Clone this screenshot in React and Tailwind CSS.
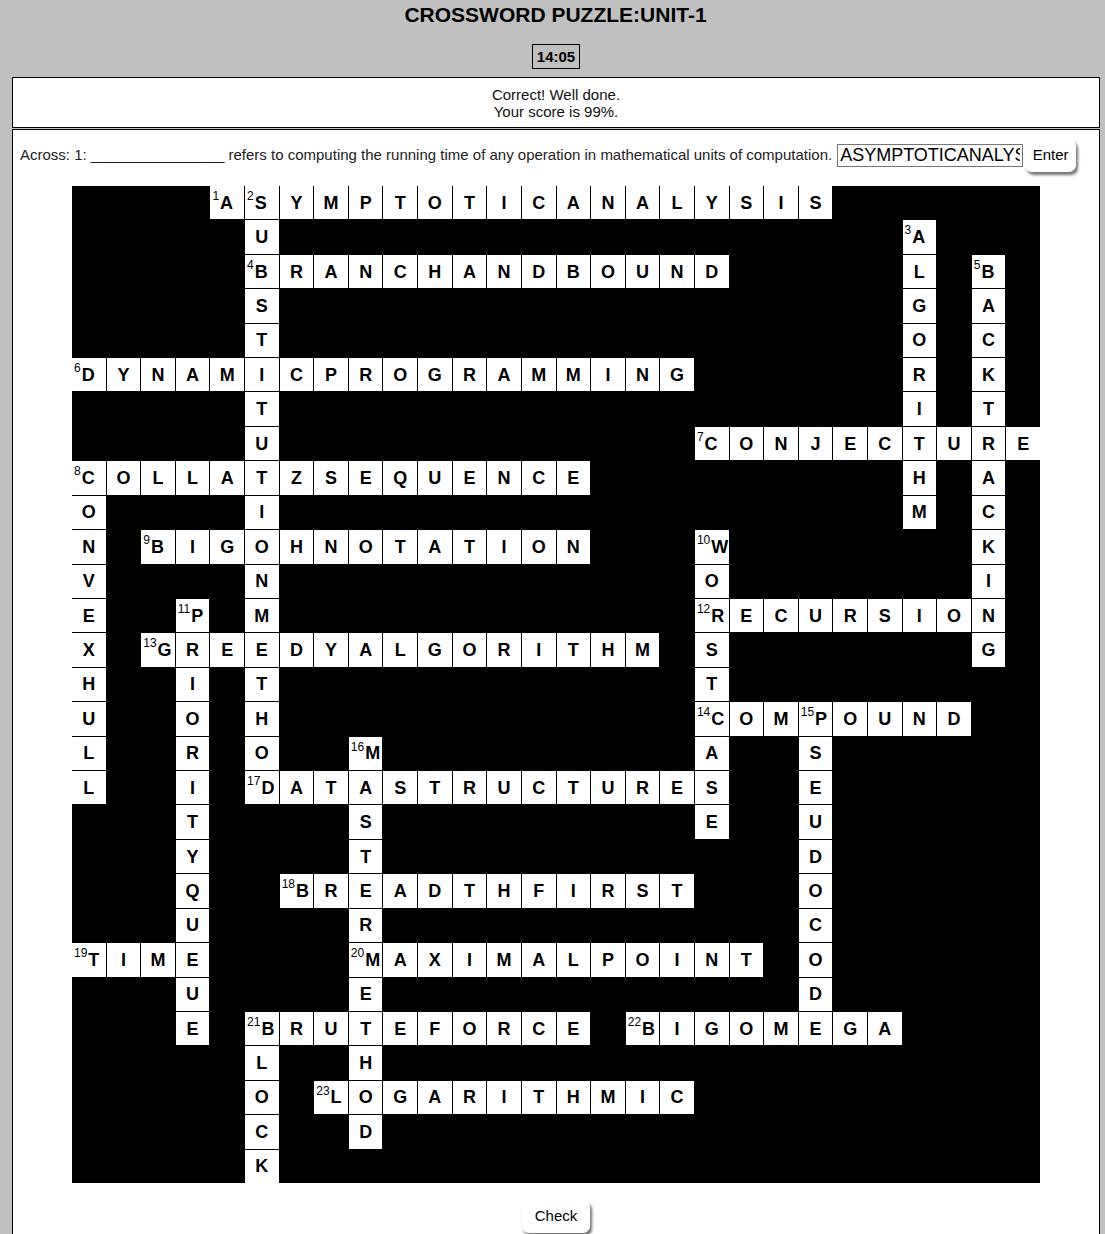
import React from 'react';

const COLS = 28;
const ROWS = 29;

// [row, col, direction, answer, clue number]
const words = [
  [0, 4, 'A', 'ASYMPTOTICANALYSIS', 1],
  [0, 5, 'D', 'SUBSTITUTIONMETHOD', 2],
  [1, 24, 'D', 'ALGORITHM', 3],
  [2, 5, 'A', 'BRANCHANDBOUND', 4],
  [2, 26, 'D', 'BACKTRACKING', 5],
  [5, 0, 'A', 'DYNAMICPROGRAMMING', 6],
  [7, 18, 'A', 'CONJECTURE', 7],
  [8, 0, 'A', 'COLLATZSEQUENCE', 8],
  [8, 0, 'D', 'CONVEXHULL', 8],
  [10, 2, 'A', 'BIGOHNOTATION', 9],
  [10, 18, 'D', 'WORSTCASE', 10],
  [12, 3, 'D', 'PRIORITYQUEUE', 11],
  [12, 18, 'A', 'RECURSION', 12],
  [13, 2, 'A', 'GREEDYALGORITHM', 13],
  [15, 18, 'A', 'COMPOUND', 14],
  [15, 21, 'D', 'PSEUDOCODE', 15],
  [16, 8, 'D', 'MASTERMETHOD', 16],
  [17, 5, 'A', 'DATASTRUCTURES', 17],
  [20, 6, 'A', 'BREADTHFIRST', 18],
  [22, 0, 'A', 'TIME', 19],
  [22, 8, 'A', 'MAXIMALPOINT', 20],
  [24, 5, 'A', 'BRUTEFORCE', 21],
  [24, 5, 'D', 'BLOCK', 21],
  [24, 16, 'A', 'BIGOMEGA', 22],
  [26, 7, 'A', 'LOGARITHMIC', 23],
];

const buildGrid = () => {
  const cells = Array.from({ length: ROWS }, () => Array(COLS).fill(null));
  words.forEach(([r, c, dir, word, num]) => {
    for (let i = 0; i < word.length; i++) {
      const rr = dir === 'D' ? r + i : r;
      const cc = dir === 'A' ? c + i : c;
      const prev = cells[rr][cc];
      cells[rr][cc] = { letter: word[i], num: i === 0 ? num : prev ? prev.num : null };
    }
  });
  return cells;
};

const Cell = ({ cell }) => {
  if (!cell) return <div />;
  if (cell.num) {
    return (
      <div className="bg-white flex items-center pl-[2px] text-black">
        <span className="text-[12px] leading-none self-start mt-[4px] mr-[1px]">{cell.num}</span>
        <span className="text-[18px] font-bold leading-none">{cell.letter}</span>
      </div>
    );
  }
  return (
    <div className="bg-white flex items-center justify-center text-black text-[18px] font-bold leading-none">
      {cell.letter}
    </div>
  );
};

const App = () => {
  const grid = buildGrid();

  return (
    <div className="h-screen bg-[#c0c0c0] font-['Liberation_Sans',Arial,sans-serif] text-black overflow-hidden">
      <h1 className="text-center font-bold text-[21px] leading-[24px] pt-[3px] pl-[6px]">CROSSWORD PUZZLE:UNIT-1</h1>

      {/* Timer */}
      <div className="flex justify-center mt-[17px] pl-[7px]">
        <div className="border border-black px-[4px] font-bold text-[15px] leading-[23px]">14:05</div>
      </div>

      {/* Result message */}
      <div className="ml-[12px] mr-[5px] mt-[8px] border border-black bg-white h-[51px] flex flex-col items-center justify-center text-[15px] leading-[17px] text-[#111]">
        <p>Correct! Well done.</p>
        <p>Your score is 99%.</p>
      </div>

      {/* Puzzle panel */}
      <div className="ml-[12px] mr-[5px] mt-px border border-black bg-white pt-[9px] pb-[60px]">
        <div className="flex items-center pl-[7px] text-[15px] text-[#222]">
          <span>Across: 1: ________________ refers to computing the running time of any operation in mathematical units of computation.</span>
          <input
            readOnly
            value="ASYMPTOTICANALYSIS"
            className="ml-[5px] w-[186px] h-[23px] border border-[#767676] px-[2px] text-[18px] text-black outline-none font-['Liberation_Sans',Arial,sans-serif]"
          />
          <button className="ml-[2px] w-[51px] h-[33px] bg-white rounded-[7px] shadow-[2px_3px_3px_rgba(0,0,0,0.55)] text-[15px] text-black">
            Enter
          </button>
        </div>

        <div className="flex justify-center mt-[14px]">
          <div className="w-[968px] h-[997px] bg-black grid grid-cols-[repeat(28,minmax(0,1fr))] grid-rows-[repeat(29,minmax(0,1fr))] gap-px">
            {grid.map((row, r) => row.map((cell, c) => <Cell key={`${r}-${c}`} cell={cell} />))}
          </div>
        </div>

        <div className="flex justify-center mt-[17px]">
          <button className="w-[68px] h-[33px] bg-white rounded-[7px] shadow-[2px_3px_3px_rgba(0,0,0,0.55)] text-[15px] text-black">
            Check
          </button>
        </div>
      </div>
    </div>
  );
};

export default App;
